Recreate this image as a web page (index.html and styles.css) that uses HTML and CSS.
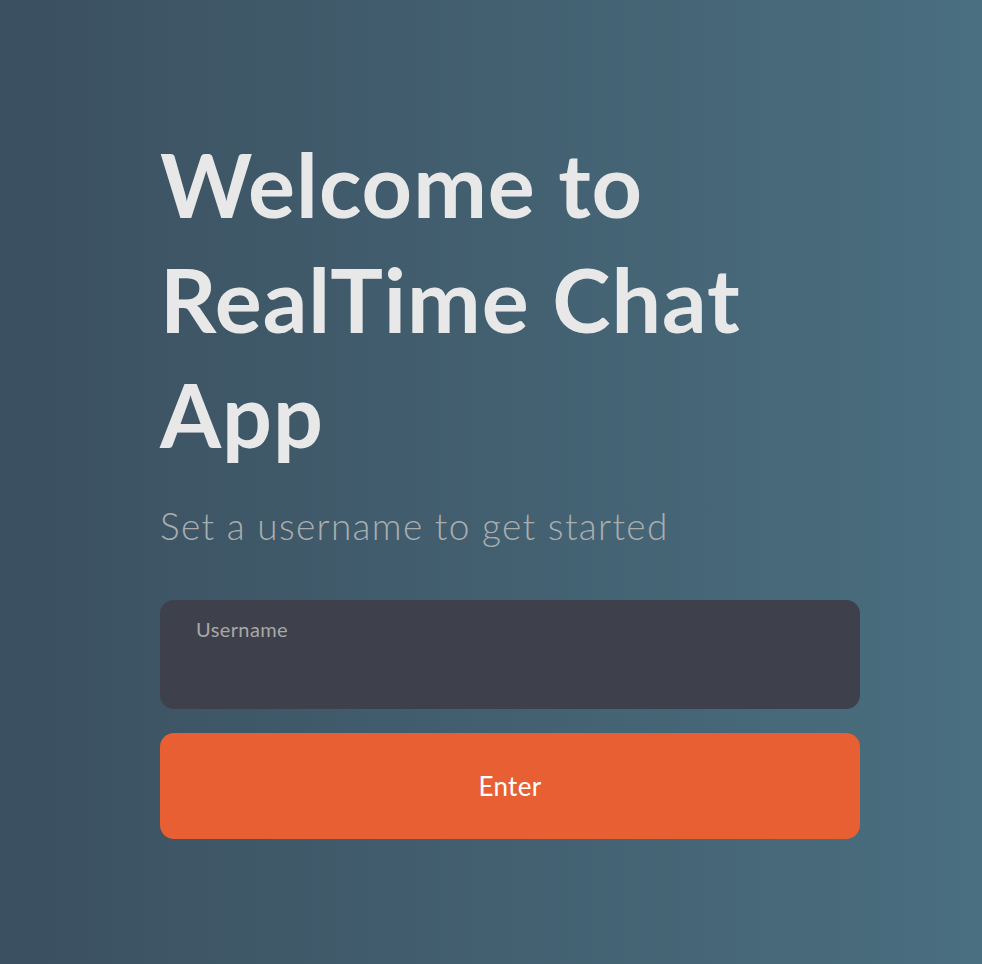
FILE: index.html
```html
<!DOCTYPE html>
<html lang="en">
<head>
<meta charset="utf-8">
<title>RealTime Chat App</title>
<link rel="stylesheet" href="styles.css">
</head>
<body>
<main class="page">
  <section class="welcome">
    <h1 class="title">Welcome to RealTime Chat App</h1>
    <p class="subtitle">Set a username to get started</p>
    <form class="form">
      <label class="field">
        <span class="field-label">Username</span>
        <input class="field-input" type="text">
      </label>
      <button class="enter" type="button">Enter</button>
    </form>
  </section>
</main>
</body>
</html>
```
FILE: styles.css
```css
* { box-sizing: border-box; }
html, body { margin: 0; padding: 0; }
body {
  font-family: Lato, "Open Sans", sans-serif;
  background: linear-gradient(to right, #3b5060, #4a6f80);
  min-height: 964px;
}
.page {
  padding: 127px 0 0 160px;
}
.welcome {
  width: 700px;
}
.title {
  margin: 0;
  font-size: 88px;
  line-height: 115px;
  font-weight: 700;
  letter-spacing: 1px;
  color: #e8e8e8;
  width: 620px;
}
.subtitle {
  margin: 31px 0 0;
  font-size: 37px;
  font-weight: 300;
  letter-spacing: 1.3px;
  color: #a9adb0;
}
.form {
  margin-top: 52px;
  display: flex;
  flex-direction: column;
  gap: 24px;
}
.field {
  display: flex;
  flex-direction: column;
  height: 109px;
  border-radius: 14px;
  background: #3e414b;
  padding: 17px 36px;
}
.field-label {
  font-size: 20px;
  letter-spacing: 0.4px;
  color: #a8a8a8;
}
.field-input {
  background: transparent;
  border: 0;
  outline: none;
  color: #e8e8e8;
  font: inherit;
  font-size: 22px;
  margin-top: 8px;
}
.enter {
  height: 106px;
  border: 0;
  border-radius: 14px;
  background: #e75f33;
  color: #ffffff;
  font-family: inherit;
  font-size: 26px;
  letter-spacing: 0.3px;
}
```
